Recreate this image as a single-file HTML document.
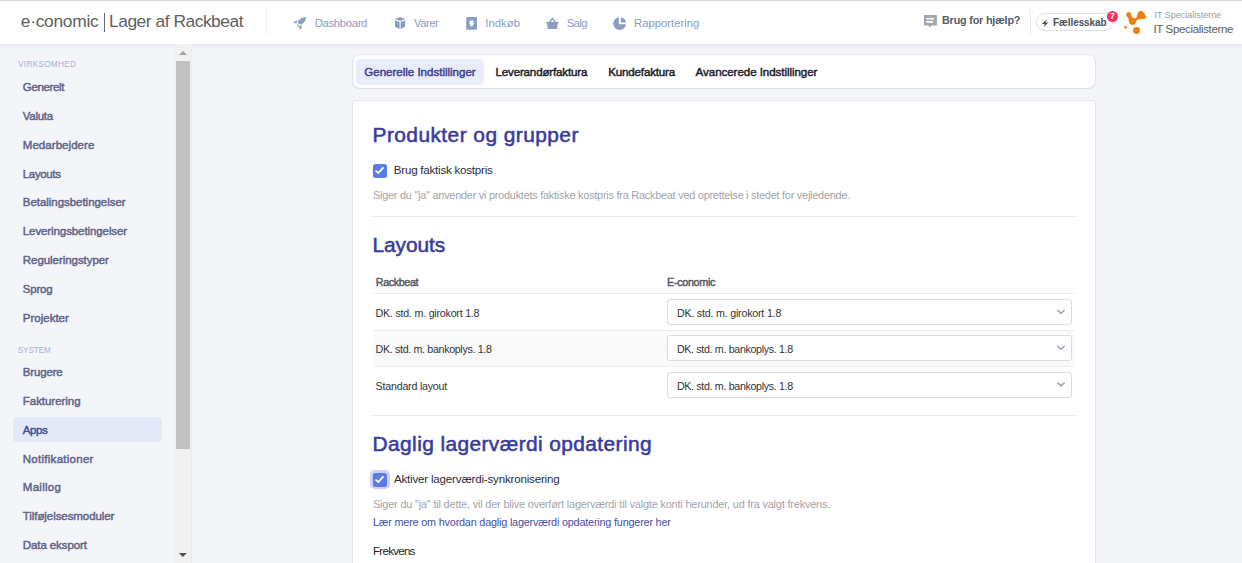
<!DOCTYPE html>
<html><head><meta charset="utf-8">
<style>
*{box-sizing:border-box;margin:0;padding:0}
html,body{width:1242px;height:563px;overflow:hidden}
body{font-family:"Liberation Sans",sans-serif;background:#f4f5f9;position:relative;color:#222}
.b{position:absolute}
.t{position:absolute;white-space:nowrap;line-height:1}
svg{position:absolute;overflow:visible}
</style></head>
<body>
<!-- header -->
<div class="b" style="left:0;top:0;width:1242px;height:1px;background:#d6d8d9"></div>
<div class="b" style="left:0;top:1px;width:1242px;height:43px;background:#fff"></div>
<div class="b" style="left:0;top:44px;width:1242px;height:6px;background:linear-gradient(rgba(200,203,214,.27),rgba(243,244,248,0))"></div>
<div class="b" style="left:104px;top:13px;width:1px;height:19px;background:#6a6a6a"></div>
<div class="b" style="left:266px;top:9px;width:1px;height:26px;background:#f0f1f4"></div>
<div class="b" style="left:1030px;top:9px;width:1px;height:26px;background:#ebebeb"></div>
<!-- nav icons -->
<svg style="left:0;top:0" width="1242" height="44" viewBox="0 0 1242 44">
 <g fill="#8d9cc3">
  <!-- rocket -->
  <path d="M306.1 16.9 Q305.8 21.6 301.6 24.6 L298.4 23.9 L297.9 21.2 Q300.8 17.3 306.1 16.9 Z"/>
  <path d="M297.6 20.5 L294.9 20.9 L293.5 23.1 L296.6 23.3 Z"/>
  <path d="M301.9 25.1 L301.5 28.3 L299.8 29.7 L299.2 26.4 Z"/>
  <path d="M297.2 24.6 L299.6 27.1" stroke="#8d9cc3" stroke-width="1.1"/>
  <!-- cube -->
  <path d="M400.1 17 L405.1 19.1 L400.1 21.1 L395 19.1 Z"/>
  <path d="M395 20.3 L399.6 22.1 L399.6 28.9 L395 26.7 Z"/>
  <path d="M400.6 22.1 L405.1 20.3 L405.1 26.7 L400.6 28.9 Z"/>
  <!-- indkob -->
  <path fill-rule="evenodd" d="M467.6 17 H475.6 Q477 17 477 18.4 V28.4 Q477 29.8 475.6 29.8 H467.6 Q466.2 29.8 466.2 28.4 V18.4 Q466.2 17 467.6 17 Z M469.7 20.4 V23.3 H468.9 L471.7 27 L474.5 23.3 H473.3 V20.4 Z"/>
  <!-- basket -->
  <path fill-rule="evenodd" d="M552.4 17.2 L556.1 22 H558.9 L558.4 23.3 H557.9 L557 28.9 H547.8 L546.9 23.3 H546.4 L546.1 22 H548.8 Z M552.4 19.6 L550.6 22 H554.2 Z"/>
  <!-- pie -->
  <path d="M618.8 17.2 A6.4 6.4 0 1 0 626 24.2 H618.8 Z"/>
  <path d="M620.9 17.2 A6.4 6.4 0 0 1 626 22.6 H620.9 Z"/>
 </g>
 <!-- chat -->
 <g fill="#a3a6ad">
  <path fill-rule="evenodd" d="M924 15 H936.9 V25.4 H931.5 L929.2 27.6 L928.8 25.4 H924 Z M926.3 18.1 V19.4 H934.1 V18.1 Z M926.3 21.1 V22.7 H933 V21.1 Z"/>
 </g>
 <!-- lightning -->
 <path fill="#4a4f5e" d="M1046.6 19.6 L1041.8 24 H1044.8 L1043.8 27 L1048.5 22.4 H1045.6 Z"/>
 <!-- orange logo -->
 <g fill="#ef7f0a">
  <path d="M1126.4 13.6 Q1127.2 11.8 1129.2 11.9 Q1131 12.3 1131.1 14.6 Q1131.2 16.4 1132.4 17.6 Q1133.8 18.6 1135.6 18.3 Q1137 17.6 1137.2 15 Q1137.6 11.6 1139.8 10.9 Q1141.6 10.6 1143.2 12.2 Q1145.2 14.2 1146 16.4 Q1146.3 18.6 1144 19.1 L1138.8 19.3 Q1136.9 19.8 1136.1 21.6 Q1135.4 24.9 1132.6 25 Q1129.6 25 1129.1 22.6 Q1128.8 20.3 1128.4 18.6 Q1127.6 17.2 1126.8 16.6 Q1126 15.4 1126.4 13.6 Z"/>
  <circle cx="1125.7" cy="27.4" r="1.3"/>
  <circle cx="1136.5" cy="30.5" r="3.4"/>
 </g>
</svg>
<div class="b" style="left:1036px;top:13px;width:77px;height:17.5px;border:1.5px solid #dfe0e2;border-radius:9px"></div>
<div class="b" style="left:1107px;top:10.5px;width:11.3px;height:11.3px;border-radius:50%;background:#f7325f"></div>
<div class="t" style="left:1110px;top:12.4px;font-size:8.5px;font-weight:bold;color:#fff">7</div>

<!-- sidebar -->
<div class="b" style="left:0;top:44px;width:175px;height:519px;background:#f4f5f9"></div>
<div class="b" style="left:0;top:44px;width:175px;height:5px;background:linear-gradient(rgba(200,203,214,.3),rgba(244,245,249,0))"></div>
<div class="b" style="left:175px;top:44px;width:16px;height:519px;background:#f1f1f1"></div>
<div class="b" style="left:191px;top:44px;width:1px;height:519px;background:#e8eaef"></div>
<div class="b" style="left:176px;top:61px;width:14px;height:387.5px;background:#c1c1c1"></div>
<svg style="left:0;top:0" width="200" height="563">
 <path d="M183 50.9 L187 54.9 H179 Z" fill="#a3a3a3"/>
 <path d="M178.9 553.1 H186.9 L182.8 556.9 Z" fill="#505050"/>
</svg>
<div class="b" style="left:13px;top:417px;width:149px;height:25px;background:#e4e9f7;border-radius:4px"></div>

<!-- tabs -->
<div class="b" style="left:353px;top:55px;width:742px;height:33.3px;background:#fff;border-radius:7px;box-shadow:0 0 0 1px rgba(30,40,90,.055),0 1px 2px rgba(30,40,80,.07)"></div>
<div class="b" style="left:356px;top:58.8px;width:128px;height:26px;background:#e9edf9;border-radius:5px"></div>

<!-- card -->
<div class="b" style="left:353px;top:100.7px;width:742px;height:480px;background:#fff;border-radius:2px;box-shadow:0 0 0 1px rgba(30,40,90,.055),0 1px 2px rgba(30,40,80,.07)"></div>
<div class="b" style="left:373px;top:164px;width:14px;height:14px;background:#5a7de5;border-radius:2.5px"></div>
<svg style="left:0;top:0" width="1242" height="563">
 <path d="M375.5 170.7 L378.3 173 L383.4 167.4" fill="none" stroke="#fff" stroke-width="1.7"/>
</svg>
<div class="b" style="left:373px;top:216px;width:702px;height:1px;background:#e8e8eb"></div>
<div class="b" style="left:373px;top:293px;width:702px;height:1px;background:#ebecf0"></div>
<div class="b" style="left:373px;top:331px;width:702px;height:35px;background:#fafafa"></div>
<div class="b" style="left:373px;top:330px;width:702px;height:1px;background:#ebecf0"></div>
<div class="b" style="left:373px;top:366px;width:702px;height:1px;background:#ebecf0"></div>
<div class="b" style="left:666.5px;top:299.4px;width:405px;height:25.6px;background:#fff;border:1px solid #d9dce3;border-radius:3px"></div>
<div class="b" style="left:666.5px;top:335.4px;width:405px;height:25.6px;background:#fff;border:1px solid #d9dce3;border-radius:3px"></div>
<div class="b" style="left:666.5px;top:372px;width:405px;height:25.6px;background:#fff;border:1px solid #d9dce3;border-radius:3px"></div>
<svg style="left:0;top:0" width="1242" height="563">
 <g fill="none" stroke="#9ca1b3" stroke-width="1.5">
  <path d="M1057.4 310 L1061 313.3 L1064.6 310"/>
  <path d="M1057.4 346 L1061 349.3 L1064.6 346"/>
  <path d="M1057.4 382.6 L1061 385.9 L1064.6 382.6"/>
 </g>
</svg>
<div class="b" style="left:373px;top:415px;width:702px;height:1px;background:#e8e8eb"></div>
<div class="b" style="left:370.4px;top:470px;width:19.4px;height:19.2px;background:#ccd3f7;border-radius:5px"></div>
<div class="b" style="left:373px;top:473px;width:14px;height:14px;background:#5a7de5;border-radius:2.5px"></div>
<svg style="left:0;top:0" width="1242" height="563">
 <path d="M375.5 479.7 L378.3 482 L383.4 476.4" fill="none" stroke="#fff" stroke-width="1.7"/>
</svg>
<div class="t" style="left:20.80px;top:13.00px;font-size:17.4px;letter-spacing:-0.291px;color:#606060;">e·conomic</div>
<div class="t" style="left:109.00px;top:13.00px;font-size:17.4px;letter-spacing:-0.474px;color:#606060;">Lager af Rackbeat</div>
<div class="t" style="left:314.70px;top:18.00px;font-size:11.3px;letter-spacing:-0.323px;color:#8d9bc4;">Dashboard</div>
<div class="t" style="left:414.00px;top:18.00px;font-size:11.3px;letter-spacing:-0.506px;color:#8d9bc4;">Varer</div>
<div class="t" style="left:485.20px;top:18.00px;font-size:11.3px;letter-spacing:0.069px;color:#8d9bc4;">Indkøb</div>
<div class="t" style="left:566.70px;top:18.00px;font-size:11.3px;letter-spacing:-0.609px;color:#8d9bc4;">Salg</div>
<div class="t" style="left:634.10px;top:18.00px;font-size:11.3px;letter-spacing:-0.012px;color:#8d9bc4;">Rapportering</div>
<div class="t" style="left:942.00px;top:15.00px;font-size:10.8px;letter-spacing:-0.184px;color:#545a6b;font-weight:bold;">Brug for hjælp?</div>
<div class="t" style="left:1053.00px;top:18.00px;font-size:10px;letter-spacing:-0.096px;color:#4a4f5e;font-weight:bold;">Fællesskab</div>
<div class="t" style="left:1154.40px;top:11.00px;font-size:9.0px;letter-spacing:-0.008px;color:#999ca3;">IT Specialisterne</div>
<div class="t" style="left:1153.40px;top:24.00px;font-size:11.5px;letter-spacing:-0.335px;color:#5c5c5c;">IT Specialisterne</div>
<div class="t" style="left:18.10px;top:61.00px;font-size:8.2px;letter-spacing:0.296px;color:#a9b1d6;">VIRKSOMHED</div>
<div class="t" style="left:17.70px;top:347.00px;font-size:8.2px;letter-spacing:-0.109px;color:#a9b1d6;">SYSTEM</div>
<div class="t" style="left:22.80px;top:82.00px;font-size:11.5px;letter-spacing:-0.345px;color:#606288;-webkit-text-stroke:.45px #606288;">Generelt</div>
<div class="t" style="left:22.80px;top:111.00px;font-size:11.5px;letter-spacing:-0.272px;color:#606288;-webkit-text-stroke:.45px #606288;">Valuta</div>
<div class="t" style="left:22.80px;top:140.00px;font-size:11.5px;letter-spacing:0.049px;color:#606288;-webkit-text-stroke:.45px #606288;">Medarbejdere</div>
<div class="t" style="left:22.80px;top:169.00px;font-size:11.5px;letter-spacing:-0.355px;color:#606288;-webkit-text-stroke:.45px #606288;">Layouts</div>
<div class="t" style="left:22.80px;top:197.00px;font-size:11.5px;letter-spacing:-0.039px;color:#606288;-webkit-text-stroke:.45px #606288;">Betalingsbetingelser</div>
<div class="t" style="left:22.80px;top:226.00px;font-size:11.5px;letter-spacing:-0.094px;color:#606288;-webkit-text-stroke:.45px #606288;">Leveringsbetingelser</div>
<div class="t" style="left:22.80px;top:255.00px;font-size:11.5px;letter-spacing:-0.054px;color:#606288;-webkit-text-stroke:.45px #606288;">Reguleringstyper</div>
<div class="t" style="left:22.80px;top:284.00px;font-size:11.5px;letter-spacing:-0.198px;color:#606288;-webkit-text-stroke:.45px #606288;">Sprog</div>
<div class="t" style="left:22.80px;top:313.00px;font-size:11.5px;letter-spacing:0.002px;color:#606288;-webkit-text-stroke:.45px #606288;">Projekter</div>
<div class="t" style="left:22.80px;top:367.00px;font-size:11.5px;letter-spacing:-0.169px;color:#606288;-webkit-text-stroke:.45px #606288;">Brugere</div>
<div class="t" style="left:22.80px;top:396.00px;font-size:11.5px;letter-spacing:-0.037px;color:#606288;-webkit-text-stroke:.45px #606288;">Fakturering</div>
<div class="t" style="left:22.80px;top:425.00px;font-size:11.5px;letter-spacing:-0.387px;color:#3b4d98;-webkit-text-stroke:.45px #3b4d98;">Apps</div>
<div class="t" style="left:22.80px;top:454.00px;font-size:11.5px;letter-spacing:0.270px;color:#606288;-webkit-text-stroke:.45px #606288;">Notifikationer</div>
<div class="t" style="left:22.80px;top:482.00px;font-size:11.5px;letter-spacing:0.277px;color:#606288;-webkit-text-stroke:.45px #606288;">Maillog</div>
<div class="t" style="left:22.80px;top:511.00px;font-size:11.5px;letter-spacing:-0.073px;color:#606288;-webkit-text-stroke:.45px #606288;">Tilføjelsesmoduler</div>
<div class="t" style="left:22.80px;top:540.00px;font-size:11.5px;letter-spacing:-0.100px;color:#606288;-webkit-text-stroke:.45px #606288;">Data eksport</div>
<div class="t" style="left:364.30px;top:66.00px;font-size:11.6px;letter-spacing:-0.035px;color:#3e3e8a;-webkit-text-stroke:.45px #3e3e8a;">Generelle Indstillinger</div>
<div class="t" style="left:495.50px;top:66.00px;font-size:11.6px;letter-spacing:-0.180px;color:#1c1c2a;-webkit-text-stroke:.45px #1c1c2a;">Leverandørfaktura</div>
<div class="t" style="left:608.20px;top:66.00px;font-size:11.6px;letter-spacing:-0.175px;color:#1c1c2a;-webkit-text-stroke:.45px #1c1c2a;">Kundefaktura</div>
<div class="t" style="left:695.60px;top:66.00px;font-size:11.6px;letter-spacing:-0.073px;color:#1c1c2a;-webkit-text-stroke:.45px #1c1c2a;">Avancerede Indstillinger</div>
<div class="t" style="left:372.50px;top:125.00px;font-size:20.9px;letter-spacing:0.444px;color:#393c9b;-webkit-text-stroke:.55px #393c9b;">Produkter og grupper</div>
<div class="t" style="left:393.80px;top:164.00px;font-size:11.6px;letter-spacing:-0.237px;color:#2b2b3b;">Brug faktisk kostpris</div>
<div class="t" style="left:373.00px;top:190.00px;font-size:10.9px;letter-spacing:-0.237px;color:#a2a3a8;">Siger du "ja" anvender vi produktets faktiske kostpris fra Rackbeat ved oprettelse i stedet for vejledende.</div>
<div class="t" style="left:372.60px;top:235.00px;font-size:20.9px;letter-spacing:-0.104px;color:#393c9b;-webkit-text-stroke:.55px #393c9b;">Layouts</div>
<div class="t" style="left:375.80px;top:277.00px;font-size:10.8px;letter-spacing:-0.416px;color:#555a66;-webkit-text-stroke:.45px #555a66;">Rackbeat</div>
<div class="t" style="left:667.00px;top:277.00px;font-size:10.8px;letter-spacing:-0.325px;color:#555a66;-webkit-text-stroke:.45px #555a66;">E-conomic</div>
<div class="t" style="left:375.60px;top:308.00px;font-size:10.7px;letter-spacing:-0.232px;color:#333;">DK. std. m. girokort 1.8</div>
<div class="t" style="left:375.60px;top:344.00px;font-size:10.7px;letter-spacing:-0.340px;color:#333;">DK. std. m. bankoplys. 1.8</div>
<div class="t" style="left:375.60px;top:381.00px;font-size:10.7px;letter-spacing:-0.228px;color:#333;">Standard layout</div>
<div class="t" style="left:676.90px;top:308.00px;font-size:10.7px;letter-spacing:-0.211px;color:#333;">DK. std. m. girokort 1.8</div>
<div class="t" style="left:676.90px;top:344.00px;font-size:10.7px;letter-spacing:-0.336px;color:#333;">DK. std. m. bankoplys. 1.8</div>
<div class="t" style="left:676.90px;top:381.00px;font-size:10.7px;letter-spacing:-0.336px;color:#333;">DK. std. m. bankoplys. 1.8</div>
<div class="t" style="left:372.60px;top:434.00px;font-size:20.9px;letter-spacing:0.399px;color:#393c9b;-webkit-text-stroke:.55px #393c9b;">Daglig lagerværdi opdatering</div>
<div class="t" style="left:393.90px;top:473.00px;font-size:11.6px;letter-spacing:-0.196px;color:#2b2b3b;">Aktiver lagerværdi-synkronisering</div>
<div class="t" style="left:373.00px;top:499.00px;font-size:10.9px;letter-spacing:-0.172px;color:#a2a3a8;">Siger du "ja" til dette, vil der blive overført lagerværdi til valgte konti herunder, ud fra valgt frekvens.</div>
<div class="t" style="left:373.00px;top:517.00px;font-size:10.9px;letter-spacing:-0.221px;color:#4750a6;">Lær mere om hvordan daglig lagerværdi opdatering fungerer her</div>
<div class="t" style="left:373.00px;top:545.00px;font-size:11.6px;letter-spacing:-0.754px;color:#222;">Frekvens</div>
</body></html>
